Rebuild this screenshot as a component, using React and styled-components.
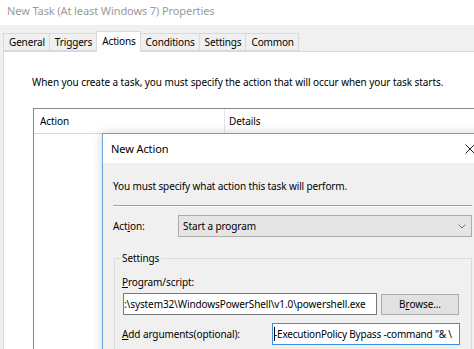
import React from "react";
import styled, { createGlobalStyle } from "styled-components";

const GlobalStyle = createGlobalStyle`
  html, body { margin: 0; padding: 0; background: #ffffff; }
  body { font-family: "Noto Sans", "Open Sans", sans-serif; font-size: 10px; color: #000; }
  * { box-sizing: border-box; }
`;

const Window = styled.div`
  position: relative;
  width: 474px;
  height: 349px;
  overflow: hidden;
  background: #f0f0f0;
  display: flex;
  flex-direction: column;
`;

const TitleBar = styled.div`
  height: 25px;
  flex: none;
  background: #ffffff;
  color: #9a9a9a;
  font-size: 11px;
  line-height: 16px;
  padding: 3px 0 0 7px;
  letter-spacing: -0.1px;
`;

const TabRow = styled.div`
  height: 26px;
  flex: none;
  display: flex;
  align-items: flex-end;
  padding-left: 3px;
  position: relative;
  z-index: 1;
`;

const Tab = styled.div`
  height: ${(p) => (p.$active ? "21px" : "18px")};
  margin-bottom: ${(p) => (p.$active ? "-1px" : "0")};
  padding: 0 4px ${(p) => (p.$active ? "3px" : "0")} 5px;
  display: flex;
  align-items: center;
  background: ${(p) => (p.$active ? "#ffffff" : "#f0f0f0")};
  border: 1px solid #d9d9d9;
  border-bottom: ${(p) => (p.$active ? "none" : "1px solid #d9d9d9")};
  margin-left: -1px;
  white-space: nowrap;
  letter-spacing: -0.15px;
  &:first-child { margin-left: 0; }
`;

const Page = styled.div`
  flex: 1;
  margin-left: 3px;
  width: 480px;
  background: #ffffff;
  border: 1px solid #d9d9d9;
  padding: 23px 0 0 28px;
`;

const Intro = styled.div`
  line-height: 14px;
  white-space: nowrap;
  letter-spacing: -0.07px;
`;

const Table = styled.div`
  margin: 19px 0 0 1px;
  width: 470px;
  height: 260px;
  border: 1px solid #828790;
`;

const HeaderRow = styled.div`
  display: flex;
  height: 25px;
  border-bottom: 1px solid #bcdcf4;
`;

const HeaderCell = styled.div`
  width: ${(p) => p.$width};
  padding-left: ${(p) => p.$pad};
  display: flex;
  align-items: center;
  border-right: ${(p) => (p.$divider ? "1px solid #e5e5e5" : "none")};
  letter-spacing: -0.1px;
`;

const Dialog = styled.div`
  position: absolute;
  left: 102px;
  top: 133px;
  width: 391px;
  height: 240px;
  border: 1px solid #6aa3d8;
  background: #f0f0f0;
  box-shadow: 0 0 10px rgba(0, 0, 0, 0.18);
  display: flex;
  flex-direction: column;
  z-index: 2;
`;

const DialogTitle = styled.div`
  height: 29px;
  flex: none;
  background: #ffffff;
  display: flex;
  align-items: center;
  justify-content: space-between;
  padding-left: 8px;
  font-size: 11px;
  letter-spacing: -0.1px;
`;

const CloseButton = styled.div`
  width: 44px;
  height: 29px;
  display: flex;
  align-items: center;
  justify-content: center;
`;

const DialogBody = styled.div`
  padding: 16px 0 0 10px;
  display: flex;
  flex-direction: column;
`;

const Instruction = styled.div`
  line-height: 14px;
  letter-spacing: -0.12px;
  white-space: nowrap;
`;

const Separator = styled.div`
  margin-top: 12px;
  width: 359px;
  height: 2px;
  border-top: 1px solid #a0a0a0;
  border-bottom: 1px solid #ffffff;
`;

const ActionRow = styled.div`
  margin-top: 8px;
  display: flex;
  align-items: center;
  height: 22px;
`;

const Label = styled.div`
  width: ${(p) => p.$width || "auto"};
  flex: none;
  line-height: 14px;
  letter-spacing: -0.1px;
  white-space: nowrap;
`;

const Key = styled.span`
  text-decoration: underline;
  text-underline-offset: 1px;
`;

const Combo = styled.div`
  width: 294px;
  height: 22px;
  border: 1px solid #acacac;
  background: #e5e5e5;
  display: flex;
  align-items: center;
  justify-content: space-between;
  padding: 0 5px 0 4px;
  letter-spacing: -0.1px;
`;

const Group = styled.fieldset`
  margin: 14px 0 0 1px;
  width: 358px;
  padding: 0 0 40px 7px;
  border: 1px solid #dcdcdc;
  min-width: 0;
`;

const Legend = styled.legend`
  padding: 0 2px;
  margin-left: -2px;
  line-height: 14px;
  letter-spacing: -0.1px;
`;

const FieldLabel = styled(Label)`
  margin-top: 10px;
`;

const FieldRow = styled.div`
  margin-top: ${(p) => p.$gap};
  display: flex;
  align-items: center;
`;

const TextBox = styled.div`
  position: relative;
  width: ${(p) => p.$width};
  height: 22px;
  margin-left: ${(p) => p.$offset || "0"};
  flex: none;
  background: #ffffff;
  border: 1px solid ${(p) => (p.$focused ? "#3d8ee0" : "#7a7a7a")};
  overflow: hidden;
  white-space: nowrap;
  display: flex;
  align-items: center;
  padding-left: 1px;
  letter-spacing: -0.1px;
`;

const Shift = styled.span`
  margin-left: ${(p) => p.$by};
`;

const ArgText = styled.span`
  letter-spacing: -0.2px;
`;

const Caret = styled.span`
  display: inline-block;
  width: 1px;
  height: 14px;
  background: #000;
  margin-right: -1px;
  flex: none;
`;

const Button = styled.div`
  margin-left: 4px;
  width: 78px;
  height: 21px;
  background: #e1e1e1;
  border: 1px solid #adadad;
  display: flex;
  align-items: center;
  justify-content: center;
  letter-spacing: -0.1px;
`;

const tabs = ["General", "Triggers", "Actions", "Conditions", "Settings", "Common"];

export default function App() {
  return (
    <>
      <GlobalStyle />
      <Window>
        <TitleBar>New Task (At least Windows 7) Properties</TitleBar>
        <TabRow>
          {tabs.map((t) => (
            <Tab key={t} $active={t === "Actions"}>
              {t}
            </Tab>
          ))}
        </TabRow>
        <Page>
          <Intro>
            When you create a task, you must specify the action that will occur when your task starts.
          </Intro>
          <Table>
            <HeaderRow>
              <HeaderCell $width="191px" $pad="6px" $divider>
                Action
              </HeaderCell>
              <HeaderCell $width="200px" $pad="4px">
                Details
              </HeaderCell>
            </HeaderRow>
          </Table>
        </Page>

        <Dialog>
          <DialogTitle>
            <span>New Action</span>
            <CloseButton>
              <svg width="10" height="10" viewBox="0 0 10 10">
                <path d="M0.5 0.5 L9.5 9.5 M9.5 0.5 L0.5 9.5" stroke="#222" strokeWidth="1" fill="none" />
              </svg>
            </CloseButton>
          </DialogTitle>
          <DialogBody>
            <Instruction>You must specify what action this task will perform.</Instruction>
            <Separator />
            <ActionRow>
              <Label $width="65px">
                Act<Key>i</Key>on:
              </Label>
              <Combo>
                <span>Start a program</span>
                <svg width="8" height="5" viewBox="0 0 8 5">
                  <path d="M0.5 0.5 L4 4 L7.5 0.5" stroke="#707070" strokeWidth="1" fill="none" />
                </svg>
              </Combo>
            </ActionRow>
            <Group>
              <Legend>Settings</Legend>
              <FieldLabel>
                <Key>P</Key>rogram/script:
              </FieldLabel>
              <FieldRow $gap="4px">
                <TextBox $width="254px" $offset="1px">
                  <Shift $by="-1px">:\system32\WindowsPowerShell\v1.0\powershell.exe</Shift>
                </TextBox>
                <Button>
                  B<Key>r</Key>owse...
                </Button>
              </FieldRow>
              <FieldRow $gap="8px">
                <Label $width="150px">
                  <Key>A</Key>dd arguments(optional):
                </Label>
                <TextBox $width="188px" $focused>
                  <Caret />
                  <ArgText>-ExecutionPolicy Bypass -command "&amp; \</ArgText>
                </TextBox>
              </FieldRow>
            </Group>
          </DialogBody>
        </Dialog>
      </Window>
    </>
  );
}
